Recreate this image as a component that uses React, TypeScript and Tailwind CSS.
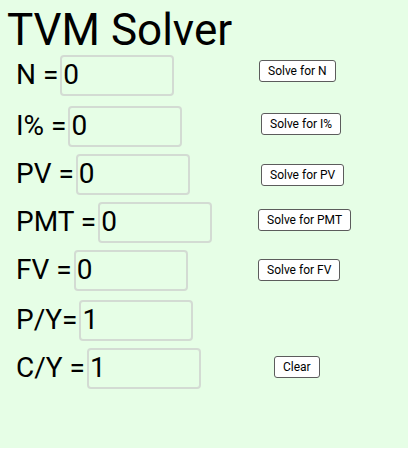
import React from "react";

type Row = { label: string; value: string; btn?: string; rowMt: string; btnCls: string };

const rows: Row[] = [
  { label: "N =", value: "0", btn: "Solve for N", rowMt: "mt-0", btnCls: "ml-[1px] mb-[8px]" },
  { label: "I% =", value: "0", btn: "Solve for I%", rowMt: "mt-[3px]", btnCls: "ml-[3px] mb-[4px]" },
  { label: "PV =", value: "0", btn: "Solve for PV", rowMt: "mt-0", btnCls: "ml-[3px] mt-[2px]" },
  { label: "PMT =", value: "0", btn: "Solve for PMT", rowMt: "mt-0", btnCls: "ml-0 mb-[4px]" },
  { label: "FV =", value: "0", btn: "Solve for FV", rowMt: "mt-0", btnCls: "ml-0" },
  { label: "P/Y=", value: "1", rowMt: "mt-[2px]", btnCls: "" },
  { label: "C/Y =", value: "1", btn: "Clear", rowMt: "mt-0", btnCls: "ml-[16px] mb-[2px]" },
];

export default function App() {
  return (
    <div className="w-[408px] h-[448px] bg-[#e6fee6] font-['Roboto',sans-serif] text-black">
      <h1 className="text-[44px] leading-[41px] pl-[7px] pt-[10px]">TVM Solver</h1>
      <div className="flex flex-col">
        {rows.map((r) => (
          <div key={r.label} className={`h-[48px] flex items-center ${r.rowMt}`}>
            <div className="w-[258px] shrink-0 flex items-center pl-[16px]">
              <span className="text-[28px] leading-none">{r.label}</span>
              <input
                readOnly
                value={r.value}
                className="ml-[2px] w-[114px] h-[41px] border-2 border-[#d3dbd3] rounded-[4px] bg-transparent px-[1px] text-[28px] font-['Roboto',sans-serif] outline-none"
              />
            </div>
            {r.btn && (
              <button
                className={`h-[22px] px-[8px] bg-white border border-[#5c5c5c] rounded-[3px] text-[12px] leading-none font-['Roboto',sans-serif] ${r.btnCls}`}
              >
                {r.btn}
              </button>
            )}
          </div>
        ))}
      </div>
    </div>
  );
}
